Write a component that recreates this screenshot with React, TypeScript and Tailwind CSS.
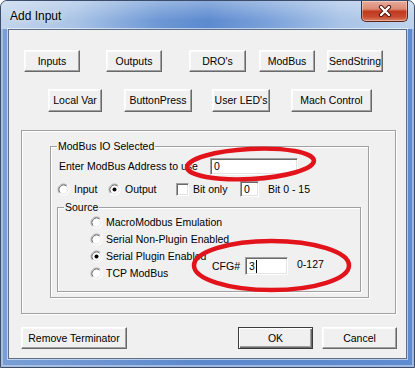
import React from "react";

function Btn({ className, children }: { className: string; children: React.ReactNode }) {
  return (
    <div
      className={
        "flex shrink-0 items-center justify-center bg-[#f0f0f0] border border-t-white border-l-white border-b-[#696969] border-r-[#696969] shadow-[inset_-1px_-1px_0_#a0a0a0,inset_1px_1px_0_#fbfbfb] whitespace-nowrap " +
        className
      }
    >
      {children}
    </div>
  );
}

function Radio({ checked }: { checked?: boolean }) {
  return (
    <svg width="13" height="13" viewBox="0 0 13 13" className="shrink-0">
      <circle cx="6.5" cy="6.5" r="6" fill="#fff" />
      <path d="M10.39 2.61 A5.5 5.5 0 0 0 2.61 10.39" fill="none" stroke="#a0a0a0" strokeWidth="1" />
      <path d="M9.68 3.32 A4.5 4.5 0 0 0 3.32 9.68" fill="none" stroke="#696969" strokeWidth="1" />
      <path d="M10.39 2.61 A5.5 5.5 0 0 1 2.61 10.39" fill="none" stroke="#ffffff" strokeWidth="1" />
      <path d="M9.68 3.32 A4.5 4.5 0 0 1 3.32 9.68" fill="none" stroke="#e3e3e3" strokeWidth="1" />
      {checked && <circle cx="6.5" cy="6.5" r="2" fill="#000" />}
    </svg>
  );
}

const sunken =
  "bg-white border border-t-[#a0a0a0] border-l-[#a0a0a0] border-b-white border-r-white shadow-[inset_1px_1px_0_#696969,inset_-1px_-1px_0_#e3e3e3]";

const etched = "border border-[#a0a0a0] shadow-[inset_1px_1px_0_#fff,1px_1px_0_#fff]";

export default function App() {
  return (
    <div className="relative w-[415px] h-[368px] overflow-hidden bg-white font-['Liberation_Sans',Arial,sans-serif]">
      <div className="w-full h-full flex flex-col rounded-t-[7px] border border-[#3b4d6b] bg-[linear-gradient(90deg,#7a9fd6,#5b88cc_50%,#5f8bd0)] shadow-[inset_0_0_0_2px_rgba(190,205,228,0.7)]">
        {/* Title bar */}
        <div className="h-[28px] shrink-0 flex items-start rounded-t-[6px] bg-[linear-gradient(180deg,rgba(255,255,255,0.3),rgba(255,255,255,0)_70%),linear-gradient(90deg,#c3d5ec_0%,#a9c3e6_18%,#6d98d5_38%,#5c8ad0_50%,#7ba2da_65%,#a8c3e7_82%,#bfd3ec_100%)]">
          <span className="self-center ml-[9px] mt-[1px] text-[12px] text-black [text-shadow:0_0_6px_rgba(255,255,255,0.9)]">
            Add Input
          </span>
          <div className="ml-auto mr-[6px] w-[47px] h-[21px] rounded-b-[5px] border border-t-0 border-[#5a2419] bg-[linear-gradient(180deg,#e9ab9c_0%,#dc8a75_40%,#c1391f_52%,#c84a31_80%,#dd8468_100%)] shadow-[inset_0_0_0_1px_rgba(255,255,255,0.35)] flex items-center justify-center">
            <svg width="14" height="12" viewBox="0 0 14 12">
              <path d="M3 2 L11 10 M11 2 L3 10" stroke="#4a120a" strokeWidth="4.2" strokeLinecap="round" />
              <path d="M3 2 L11 10 M11 2 L3 10" stroke="#ffffff" strokeWidth="2.4" strokeLinecap="round" />
            </svg>
          </div>
        </div>

        {/* Client area */}
        <div className="flex-1 mx-[7px] mb-[8px] border border-[#5e6f88] bg-[#f0f0f0] shadow-[0_0_0_1px_rgba(255,255,255,0.55)] flex flex-col text-[10.5px] leading-[13px] text-black">
          {/* Row 1 */}
          <div className="mt-[20px] flex h-[22px]">
            <Btn className="ml-[15px] w-[56px]">Inputs</Btn>
            <Btn className="ml-[26px] w-[56px]">Outputs</Btn>
            <Btn className="ml-[27px] w-[57px]">DRO's</Btn>
            <Btn className="ml-[13px] w-[56px]">ModBus</Btn>
            <Btn className="ml-[12px] w-[56px]">SendString</Btn>
          </div>
          {/* Row 2 */}
          <div className="mt-[17px] flex h-[23px]">
            <Btn className="ml-[39px] w-[54px]">Local Var</Btn>
            <Btn className="ml-[22px] w-[68px]">ButtonPress</Btn>
            <Btn className="ml-[20px] w-[58px]">User LED's</Btn>
            <Btn className="ml-[21px] w-[81px]">Mach Control</Btn>
          </div>

          {/* Outer frame */}
          <div className={"mt-[18px] ml-[12px] w-[375px] h-[184px] shrink-0 " + etched}>
            {/* ModBus IO Selected group */}
            <div className={"relative mt-[15px] ml-[28px] w-[319px] h-[152px] flex flex-col " + etched}>
              <span className="absolute left-[6px] -top-[7px] px-[1px] bg-[#f0f0f0]">ModBus IO Selected</span>
              <div className="mt-[11px] h-[17px] flex items-center">
                <span className="pl-[8px] w-[159px] shrink-0 whitespace-nowrap">Enter ModBus Address to use</span>
                <div className={"w-[88px] h-[17px] flex items-center pl-[3px] " + sunken}>0</div>
              </div>
              <div className="mt-[6px] h-[16px] flex items-center">
                <div className="ml-[6px] w-[51px] flex items-center gap-[4px]">
                  <Radio />
                  <span>Input</span>
                </div>
                <div className="w-[68px] flex items-center gap-[4px]">
                  <Radio checked />
                  <span>Output</span>
                </div>
                <div className="w-[64px] flex items-center gap-[4px]">
                  <div className={"w-[13px] h-[13px] shrink-0 " + sunken} />
                  <span className="whitespace-nowrap">Bit only</span>
                </div>
                <div className={"w-[19px] h-[16px] flex items-center pl-[3px] " + sunken}>0</div>
                <span className="ml-[9px] whitespace-nowrap">Bit 0 - 15</span>
              </div>

              {/* Source group */}
              <div className={"relative mt-[10px] ml-[6px] w-[304px] h-[85px] flex " + etched}>
                <span className="absolute left-[6px] -top-[7px] px-[1px] bg-[#f0f0f0]">Source</span>
                <div className="pl-[32px] pt-[6px] w-[154px] shrink-0 flex flex-col whitespace-nowrap">
                  <div className="h-[17px] flex items-center gap-[3px]">
                    <Radio />
                    <span>MacroModbus Emulation</span>
                  </div>
                  <div className="h-[17px] flex items-center gap-[3px]">
                    <Radio />
                    <span>Serial Non-Plugin Enabled</span>
                  </div>
                  <div className="h-[17px] flex items-center gap-[3px]">
                    <Radio checked />
                    <span>Serial Plugin Enabled</span>
                  </div>
                  <div className="h-[17px] flex items-center gap-[3px]">
                    <Radio />
                    <span>TCP ModBus</span>
                  </div>
                </div>
                <div className="mt-[49px] h-[18px] flex items-center">
                  <span className="w-[33px] shrink-0">CFG#</span>
                  <div className={"w-[43px] h-[18px] flex items-center pl-[3px] " + sunken}>
                    <span>3</span>
                    <span className="ml-[1px] w-[1px] h-[13px] bg-black" />
                  </div>
                  <span className="ml-[9px] -mt-[3px]">0-127</span>
                </div>
              </div>
            </div>
          </div>

          {/* Bottom buttons */}
          <div className="mt-[13px] flex h-[22px]">
            <Btn className="ml-[12px] w-[106px]">Remove Terminator</Btn>
            <div className="ml-auto w-[75px] flex items-center justify-center bg-[#f0f0f0] border border-[#3c3c3c] shadow-[inset_1px_1px_0_#fff,inset_-1px_-1px_0_#696969,inset_-2px_-2px_0_#a0a0a0]">
              OK
            </div>
            <Btn className="ml-[9px] mr-[9px] w-[75px]">Cancel</Btn>
          </div>
        </div>
      </div>

      {/* Red annotation ellipses */}
      <svg className="absolute inset-0 pointer-events-none" width="415" height="368" viewBox="0 0 415 368">
        <ellipse cx="250.5" cy="164" rx="63.5" ry="15" transform="rotate(-3 250.5 164)" fill="none" stroke="#e2131b" strokeWidth="4.5" />
        <ellipse cx="271.5" cy="265.5" rx="77.5" ry="24.5" fill="none" stroke="#e2131b" strokeWidth="4.5" />
      </svg>
    </div>
  );
}
